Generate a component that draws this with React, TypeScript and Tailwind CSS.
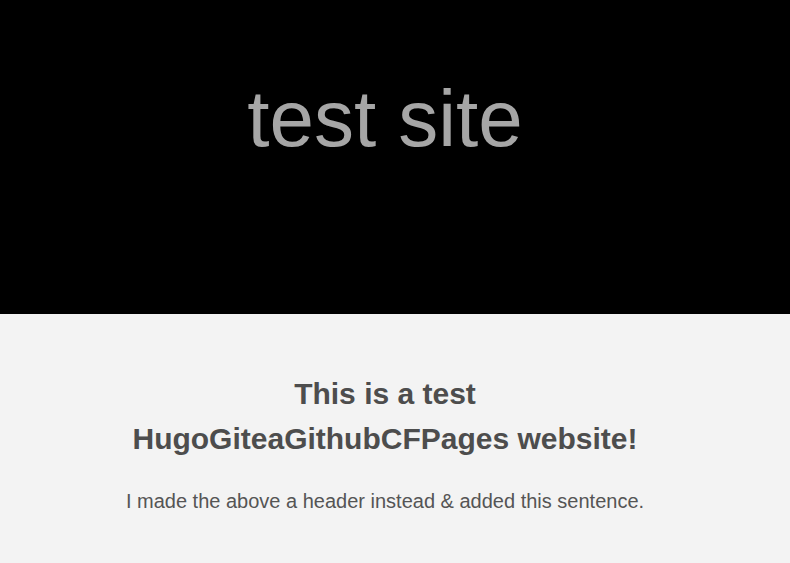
export default function App() {
  return (
    <div className="min-h-[563px] bg-[#f3f3f3] pr-[20px] font-['Liberation_Sans',Arial,sans-serif]">
      <header className="-mr-[20px] h-[314px] bg-black pr-[20px] pt-[73px] text-center">
        <h1 className="text-[80px] leading-[92px] text-[#a6a6a6]">test site</h1>
      </header>
      <main className="mx-auto flex w-[560px] flex-col items-center pt-[57px] text-center">
        <h2 className="text-[30px] font-bold leading-[45px] text-[#4d4d4d]">
          This is a test HugoGiteaGithubCFPages website!
        </h2>
        <p className="mt-[25px] whitespace-nowrap text-[20px] leading-[30px] text-[#555555]">
          I made the above a header instead &amp; added this sentence.
        </p>
      </main>
    </div>
  );
}
